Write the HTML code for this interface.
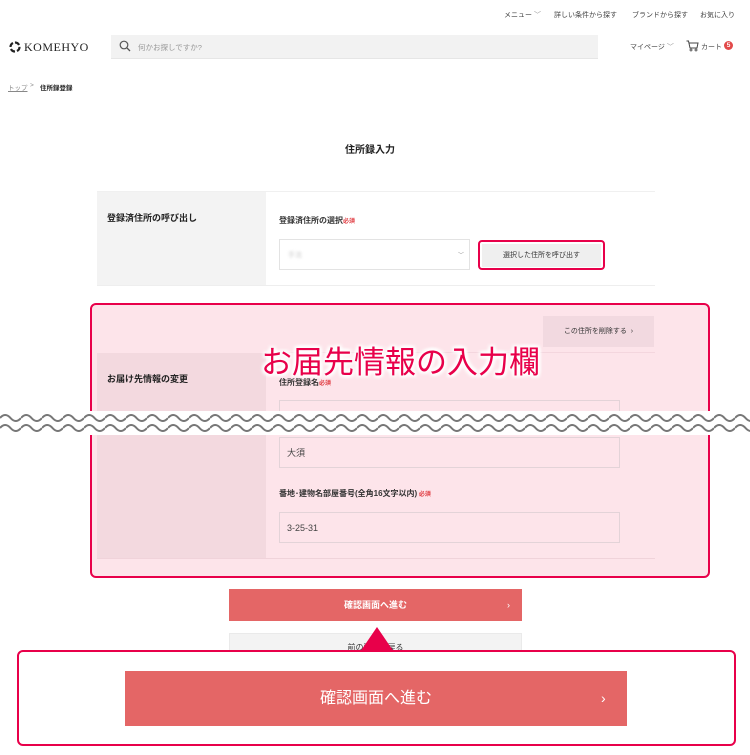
<!DOCTYPE html>
<html><head><meta charset="utf-8">
<style>
*{margin:0;padding:0;box-sizing:border-box}
body{width:750px;height:755px;background:#fff;position:relative;overflow:hidden;font-family:"Liberation Sans","Noto Sans CJK JP",sans-serif;color:#333}
.a{position:absolute;white-space:nowrap}
.s{font-size:7px;color:#444}
.b{font-weight:bold}
.req{color:#e0383e;font-size:6px;font-weight:bold}
.inp{position:absolute;border:1px solid #e3d3d8;background:#fde4ea;font-size:9px;color:#444;padding-left:7px;display:flex;align-items:center}
</style></head><body>
<div class="a s" style="left:504px;top:10px">メニュー <span style="color:#999">﹀</span></div>
<div class="a s" style="left:554px;top:10px">詳しい条件から探す</div>
<div class="a s" style="left:632px;top:10px">ブランドから探す</div>
<div class="a s" style="left:700px;top:10px">お気に入り</div>
<svg class="a" style="left:9px;top:41px" width="12" height="12" viewBox="0 0 12 12"><circle cx="6" cy="6" r="4.5" fill="none" stroke="#222" stroke-width="2.2" stroke-dasharray="5 2"/></svg>
<div class="a" style="left:24px;top:40px;font-family:'Liberation Serif',serif;font-size:12px;letter-spacing:0.5px;color:#222">KOMEHYO</div>
<div class="a" style="left:111px;top:35px;width:487px;height:24px;background:#f2f2f2;border-bottom:1px solid #e6e6e6"></div>
<svg class="a" style="left:119px;top:40px" width="12" height="12" viewBox="0 0 12 12"><circle cx="5" cy="5" r="3.8" fill="none" stroke="#555" stroke-width="1.2"/><path d="M8 8L11 11" stroke="#555" stroke-width="1.3"/></svg>
<div class="a" style="left:138px;top:42px;font-size:7.5px;color:#999">何かお探しですか?</div>
<div class="a s" style="left:630px;top:42px">マイページ <span style="color:#999">﹀</span></div>
<svg class="a" style="left:686px;top:40px" width="13" height="12" viewBox="0 0 13 12"><path d="M0.5 1H2.5L4 8H11L12 3H3" fill="none" stroke="#444" stroke-width="1"/><circle cx="5" cy="10" r="1" fill="none" stroke="#444" stroke-width=".8"/><circle cx="10" cy="10" r="1" fill="none" stroke="#444" stroke-width=".8"/></svg>
<div class="a s" style="left:701px;top:42px">カート</div>
<div class="a" style="left:724px;top:41px;width:9px;height:9px;border-radius:50%;background:#e24a4a;color:#fff;font-size:6.5px;text-align:center;line-height:9px;font-weight:bold">5</div>
<div class="a" style="left:8px;top:82px;font-size:6.5px;color:#888;text-decoration:underline">トップ</div>
<div class="a" style="left:30px;top:82px;font-size:6.5px;color:#888">&gt;</div>
<div class="a b" style="left:40px;top:82px;font-size:6.5px;color:#222">住所録登録</div>
<div class="a b" style="left:345px;top:141px;font-size:10px;color:#222">住所録入力</div>
<div class="a" style="left:97px;top:191px;width:558px;height:95px;border-top:1px solid #f0f0f0;border-bottom:1px solid #eee"></div>
<div class="a" style="left:97px;top:192px;width:169px;height:93px;background:#f3f3f3"></div>
<div class="a b" style="left:107px;top:211px;font-size:9px;color:#222;background:#f3f3f3">登録済住所の呼び出し</div>
<div class="a b" style="left:279px;top:215px;font-size:8px;color:#333">登録済住所の選択<span class="req">必須</span></div>
<div class="a" style="left:279px;top:239px;width:191px;height:31px;border:1px solid #e3e3e3;background:#fff"></div>
<div class="a" style="left:288px;top:250px;font-size:7px;color:#ccc;filter:blur(1.2px)">手法</div>
<div class="a" style="left:458px;top:250px;font-size:6px;color:#999">﹀</div>
<div class="a" style="left:478px;top:240px;width:127px;height:30px;border:2px solid #e8004a;border-radius:4px"></div>
<div class="a" style="left:482px;top:244px;width:119px;height:23px;background:#efefef;font-size:7px;color:#333;text-align:center;line-height:23px">選択した住所を呼び出す</div>
<div class="a" style="left:90px;top:303px;width:620px;height:275px;border:2px solid #e8004a;border-radius:6px;background:#fde4ea"></div>
<div class="a" style="left:543px;top:316px;width:111px;height:31px;background:#f2d9e0;font-size:7px;color:#333;text-align:center;line-height:31px">この住所を削除する &nbsp;›</div>
<div class="a" style="left:266px;top:352px;width:389px;height:1px;background:#f4d6de"></div>
<div class="a" style="left:97px;top:353px;width:169px;height:205px;background:#f3d9df"></div>
<div class="a" style="left:97px;top:558px;width:558px;height:1px;background:#f0d3da"></div>
<div class="a b" style="left:107px;top:372px;font-size:9px;color:#222">お届け先情報の変更</div>
<div class="a b" style="left:279px;top:377px;font-size:8px;color:#333">住所登録名<span class="req">必須</span></div>
<div class="inp" style="left:279px;top:400px;width:341px;height:31px"></div>
<div class="inp" style="left:279px;top:437px;width:341px;height:31px">大須</div>
<div class="a b" style="left:279px;top:488px;font-size:8px;color:#333">番地･建物名部屋番号(全角16文字以内)<span class="req"> 必須</span></div>
<div class="inp" style="left:279px;top:512px;width:341px;height:31px">3-25-31</div>
<div class="a" style="left:261px;top:337px;font-size:31px;color:#e8004a;text-shadow:0 0 3px #fff,0 0 3px #fff,0 0 4px #fff,0 0 5px #fff,2px 2px 3px #fff,-2px -2px 3px #fff,2px -2px 3px #fff,-2px 2px 3px #fff">お届先情報の入力欄</div>
<div class="a" style="left:0;top:411px;width:750px;height:24px;background:#fff"></div>
<svg class="a" style="left:0;top:408px" width="750" height="30" viewBox="0 0 750 30">
<defs><pattern id="w" x="0" y="0" width="21" height="30" patternUnits="userSpaceOnUse"><path d="M0 10Q5.25 4 10.5 10T21 10M0 20Q5.25 14 10.5 20T21 20" fill="none" stroke="#777" stroke-width="2"/></pattern></defs>
<rect width="750" height="30" fill="url(#w)"/></svg>
<div class="a" style="left:229px;top:589px;width:293px;height:32px;background:#e46666;color:#fff;font-size:9px;font-weight:bold;text-align:center;line-height:32px">確認画面へ進む</div>
<div class="a" style="left:507px;top:589px;color:#fff;font-size:9px;line-height:32px">›</div>
<div class="a" style="left:229px;top:633px;width:293px;height:30px;background:#f3f3f3;border:1px solid #eaeaea;font-size:8px;color:#333;text-align:center;line-height:28px">前の画面へ戻る</div>
<svg class="a" style="left:355px;top:626px" width="44" height="26"><path d="M22 1L39 26H5Z" fill="#e8004a"/></svg>
<div class="a" style="left:17px;top:650px;width:719px;height:96px;border:2px solid #e8004a;border-radius:6px;background:#fff"></div>
<div class="a" style="left:125px;top:671px;width:502px;height:55px;background:#e46666;color:#fff;font-size:16px;text-align:center;line-height:55px">確認画面へ進む</div>
<div class="a" style="left:601px;top:671px;color:#fff;font-size:14px;line-height:55px">›</div>
</body></html>
